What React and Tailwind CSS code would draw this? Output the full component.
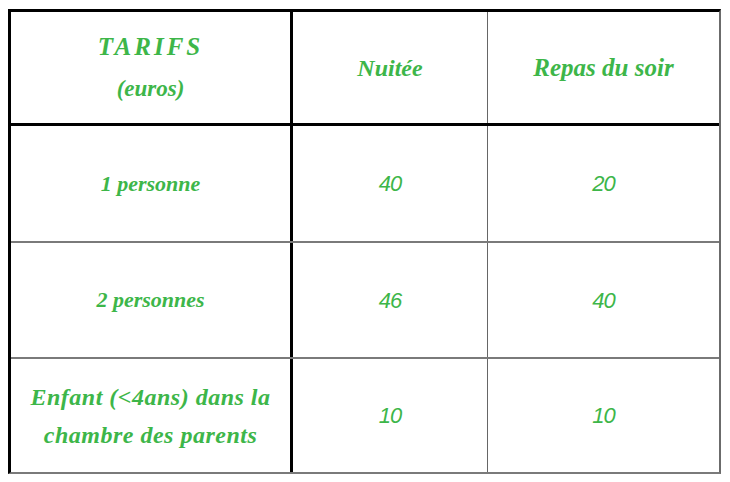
import React from 'react'

const GREEN = 'text-[#3db649]'

const rows = [
  { label: ['1 personne'], size: 'text-[22px]', nuit: '40', repas: '20', h: 'h-[117px]' },
  { label: ['2 personnes'], size: 'text-[22px]', nuit: '46', repas: '40', h: 'h-[116px]' },
  { label: ['Enfant (<4ans) dans la', 'chambre des parents'], size: 'text-[24px] tracking-[0.5px]', nuit: '10', repas: '10', h: 'h-[113px]', last: true },
]

const Label = ({ children, className = '' }) => (
  <div className={`font-['Liberation_Serif',serif] italic font-bold ${GREEN} ${className}`}>{children}</div>
)

const Num = ({ children }) => (
  <div className={`font-['Liberation_Sans',sans-serif] italic text-[22px] ${GREEN} tracking-[-1px]`}>{children}</div>
)

export default function App() {
  return (
    <div className="w-[730px] h-[482px] bg-white pt-[9px] pl-[8px]">
      <div className="w-[713px] border-t-[3px] border-l-[3px] border-black border-r-2 border-b-2 border-r-[#6b6b6b] border-b-[#7a7a7a]">
        {/* header */}
        <div className="flex h-[114px] border-b-[3px] border-black">
          <div className="w-[282px] border-r-[3px] border-black flex flex-col items-center justify-center">
            <Label className="text-[25px] leading-[42px] tracking-[3px]">TARIFS</Label>
            <Label className="text-[23px] leading-[42px]">(euros)</Label>
          </div>
          <div className="w-[195px] border-r border-[#666] flex items-center justify-center">
            <Label className="text-[24px]">Nuitée</Label>
          </div>
          <div className="flex-1 flex items-center justify-center">
            <Label className="text-[25px]">Repas du soir</Label>
          </div>
        </div>

        {rows.map((r, i) => (
          <div key={i} className={`flex ${r.h} ${r.last ? '' : 'border-b-2 border-[#7a7a7a]'}`}>
            <div className="w-[282px] border-r-[3px] border-black flex flex-col items-center justify-center">
              {r.label.map((t, j) => (
                <Label key={j} className={`${r.size} leading-[38px]`}>{t}</Label>
              ))}
            </div>
            <div className="w-[195px] border-r border-[#666] flex items-center justify-center">
              <Num>{r.nuit}</Num>
            </div>
            <div className="flex-1 flex items-center justify-center">
              <Num>{r.repas}</Num>
            </div>
          </div>
        ))}
      </div>
    </div>
  )
}
